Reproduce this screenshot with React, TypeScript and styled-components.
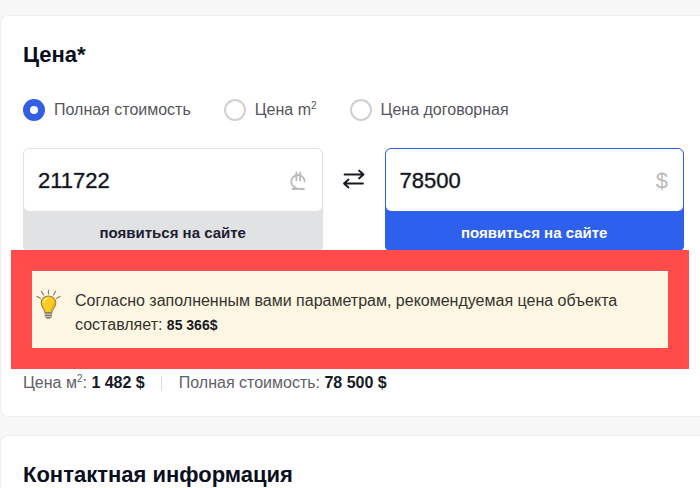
import React, { useState } from "react";
import styled, { createGlobalStyle } from "styled-components";

const GlobalStyle = createGlobalStyle`
  *, *::before, *::after { box-sizing: border-box; }
  body {
    margin: 0;
    background: #f7f7f7;
    color: #0b0f1e;
    font-family: "Liberation Sans", Arial, sans-serif;
    font-size: 16px;
  }
  svg { flex: none; }
`;

const Page = styled.main`
  display: flex;
  flex-direction: column;
  gap: 18px;
  padding-top: 15px;
  height: 100vh;
  overflow: hidden;
`;

const Card = styled.section`
  flex: none;
  padding: 24px 16px 21px 22px;
  background: #fff;
  border: 1px solid #eeeeef;
  border-right: 0;
  border-radius: 8px 0 0 8px;
`;

const Title = styled.h2`
  margin: 0;
  font-size: 22px;
  line-height: 30px;
  font-weight: 700;
`;

const Options = styled.fieldset`
  display: flex;
  gap: 33px;
  margin: 28px 0 0;
  padding: 0;
  border: 0;
`;

const Option = styled.label`
  display: flex;
  align-items: center;
  gap: 9px;
  line-height: 24px;
  color: #55565b;
  white-space: nowrap;
`;

const Radio = styled.input`
  appearance: none;
  width: 22px;
  height: 22px;
  margin: 0;
  border: 2px solid #d0d0d2;
  border-radius: 50%;
  background: #fff;
  &:checked { border: 7px solid #335fe4; }
`;

const Prices = styled.div`
  display: grid;
  grid-template-columns: 1fr 62px 1fr;
  margin-top: 26px;
`;

const PriceBox = styled.div<{ $active?: boolean }>`
  min-width: 0;
  border: 1px solid ${(p) => (p.$active ? "#2e60ee" : "#e1e2e4")};
  border-radius: 6px;
  background: ${(p) => (p.$active ? "#2e60ee" : "#e1e2e4")};
`;

const Field = styled.label`
  display: flex;
  align-items: center;
  height: 62px;
  padding: 2px 15px 0 14px;
  border-radius: 5px;
  background: #fff;
  color: #b9babc;
  font-size: 22px;
`;

const Amount = styled.input`
  flex: 1;
  min-width: 0;
  padding: 0;
  border: 0;
  outline: 0;
  background: transparent;
  color: #10131c;
  font: inherit;
  -webkit-text-stroke: 1px rgba(16, 19, 28, 0.35);
`;

const SiteButton = styled.button<{ $active?: boolean }>`
  display: block;
  width: 100%;
  height: 40px;
  padding: 2px 0 0;
  border: 0;
  background: transparent;
  color: ${(p) => (p.$active ? "#fff" : "#1c2030")};
  font: bold 15px "Liberation Sans", Arial, sans-serif;
`;

const Swap = styled.button`
  display: flex;
  align-items: center;
  justify-content: center;
  height: 62px;
  padding: 0;
  border: 0;
  background: transparent;
  color: #171a22;
`;

const Notice = styled.aside`
  margin: -2px -5px 0 -12px;
  border: 21px solid #ff4b49;
  background: #fff;
  position: relative;
`;

const NoticeBody = styled.div`
  display: flex;
  gap: 14px;
  margin: 1px 0 0;
  padding: 17px 24px 11px 4px;
  background: #fdf6e2;
  color: #33332f;
`;

const NoticeText = styled.p`
  margin: 0;
  line-height: 24px;
`;

const Strong = styled.strong<{ $small?: boolean }>`
  font-size: ${(p) => (p.$small ? "14px" : "16px")};
  color: #171a24;
`;

const Totals = styled.div`
  display: flex;
  align-items: center;
  margin-top: 2px;
  line-height: 24px;
  color: #606167;
`;

const Total = styled.span`
  & + & {
    margin-left: 16px;
    padding-left: 18px;
    background: linear-gradient(#dedee1, #dedee1) left center / 1px 15px no-repeat;
  }
`;

const Sup = styled.sup`
  font-size: 10px;
  line-height: 0;
`;

const SwapIcon = () => (
  <svg width="24" height="24" viewBox="0 0 24 24" fill="none" stroke="currentColor" strokeWidth="1.8" strokeLinecap="round" strokeLinejoin="round" aria-hidden="true">
    <path d="M2.5 7.5h19M17 3.5l4.5 4-4.5 4M21 16.5H2M6.5 12.5l-4.5 4 4.5 4" />
  </svg>
);

const LariIcon = () => (
  <svg width="18" height="20" viewBox="0 0 16 20" fill="none" stroke="currentColor" strokeWidth="1.8" strokeLinecap="round" role="img" aria-label="GEL">
    <path d="M14.6 10.5C14.4 6.6 11.7 4 8.2 4C4.4 4 1.3 6.8 1.3 10.6C1.3 13.9 3.6 16.4 7 17.6M2.6 18H14M6.4 1.4v8M10.1 1.4v8" />
  </svg>
);

const BulbIcon = () => (
  <svg width="25" height="32" viewBox="0 0 25 32" fill="none" aria-hidden="true">
    <path d="M12.5 1v4M5.5 2.5l2 3.4M19.5 2.5l-2 3.4M1 7.5l3.5 1.8M24 7.5l-3.5 1.8" stroke="#86816f" strokeWidth="1.2" strokeLinecap="round" />
    <path d="M9 23.5C9 20 5.2 18.6 5.2 13.8C5.2 9.8 8.4 7 12.4 7s7.4 2.8 7.4 6.8c0 4.8-4 6.2-4 9.7Z" fill="#fccb22" stroke="#94824d" strokeWidth="1.1" />
    <path d="M16.5 8.6c2.8 3.4 1.4 7.7-1.2 10.5l-.8 3.8h1.2c.3-3 3.7-4.8 3.7-9.1 0-2.3-1.1-4.1-2.9-5.2Z" fill="#eba91c" />
    <path d="M8 13c.2-1.8 1.3-3 2.9-3.3" stroke="#fff0a0" strokeWidth="1.2" strokeLinecap="round" />
    <path d="M8.8 23.5h7.2v4.2l-2 2h-3.2l-2-2Z" fill="#85827b" />
    <path d="M8.5 25.2h7.8M9.2 27.7h6.4" stroke="#ddd6bf" strokeWidth=".8" />
  </svg>
);

export default function App() {
  const [mode, setMode] = useState("full");
  const [gel, setGel] = useState("211722");
  const [usd, setUsd] = useState("78500");
  const options = [
    { id: "full", label: <>Полная стоимость</> },
    { id: "meter", label: <>Цена m<Sup>2</Sup></> },
    { id: "deal", label: <>Цена договорная</> },
  ];
  return (
    <>
      <GlobalStyle />
      <Page>
        <Card>
          <Title>Цена*</Title>
          <Options aria-label="Цена">
            {options.map((o) => (
              <Option key={o.id}>
                <Radio type="radio" name="mode" checked={mode === o.id} onChange={() => setMode(o.id)} />
                <span>{o.label}</span>
              </Option>
            ))}
          </Options>
          <Prices>
            <PriceBox>
              <Field>
                <Amount aria-label="Цена в лари" value={gel} onChange={(e) => setGel(e.target.value)} />
                <LariIcon />
              </Field>
              <SiteButton type="button">появиться на сайте</SiteButton>
            </PriceBox>
            <Swap type="button" aria-label="Поменять валюту"><SwapIcon /></Swap>
            <PriceBox $active>
              <Field>
                <Amount aria-label="Цена в долларах" value={usd} onChange={(e) => setUsd(e.target.value)} />
                <span>$</span>
              </Field>
              <SiteButton type="button" $active>появиться на сайте</SiteButton>
            </PriceBox>
          </Prices>
          <Notice>
            <NoticeBody>
              <BulbIcon />
              <NoticeText>
                Согласно заполненным вами параметрам, рекомендуемая цена объекта составляет: <Strong $small>85 366$</Strong>
              </NoticeText>
            </NoticeBody>
          </Notice>
          <Totals>
            <Total>Цена м<Sup>2</Sup>: <Strong>1 482 $</Strong></Total>
            <Total>Полная стоимость: <Strong>78 500 $</Strong></Total>
          </Totals>
        </Card>
        <Card>
          <Title>Контактная информация</Title>
        </Card>
      </Page>
    </>
  );
}
